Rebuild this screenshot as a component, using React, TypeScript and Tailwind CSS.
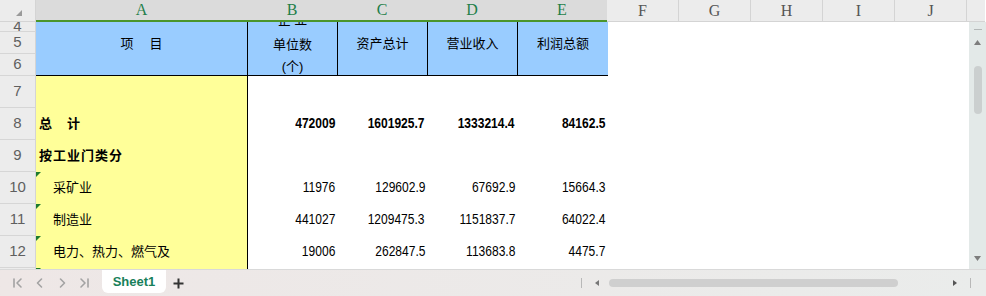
import React from 'react';

const cjk = "font-['Liberation_Sans','Noto_Sans_CJK_SC',sans-serif]";
const num = "font-['Liberation_Sans',sans-serif]";

type DataRow = {
  label: string;
  indent?: boolean;
  bold?: boolean;
  flag?: boolean;
  values: string[];
};

const dataRows: DataRow[] = [
  { label: '', values: ['', '', '', ''] },
  { label: '总　计', bold: true, values: ['472009', '1601925.7', '1333214.4', '84162.5'] },
  { label: '按工业门类分', bold: true, values: ['', '', '', ''] },
  { label: '采矿业', indent: true, flag: true, values: ['11976', '129602.9', '67692.9', '15664.3'] },
  { label: '制造业', indent: true, flag: true, values: ['441027', '1209475.3', '1151837.7', '64022.4'] },
  { label: '电力、热力、燃气及', indent: true, flag: true, values: ['19006', '262847.5', '113683.8', '4475.7'] },
  { label: '', flag: true, values: ['', '', '', ''] },
];

const rowLabels = [
  { n: '4', h: 'h-[10px]' },
  { n: '5', h: 'h-[22px]' },
  { n: '6', h: 'h-[22px]' },
  { n: '7', h: 'h-[32px]' },
  { n: '8', h: 'h-[32px]' },
  { n: '9', h: 'h-[32px]' },
  { n: '10', h: 'h-[32px]' },
  { n: '11', h: 'h-[32px]' },
  { n: '12', h: 'h-[32px]' },
  { n: '13', h: 'h-[32px]' },
];

function Flag() {
  return (
    <svg className="absolute left-0 top-0" width="5" height="5" viewBox="0 0 5 5">
      <path d="M0 0H5L0 5Z" fill="#1e7b2e" />
    </svg>
  );
}

function ColumnHeader() {
  return (
    <div className="flex h-[22px] w-[986px]">
      <div className="relative w-[36px] border-r border-b border-[#d4d4d4] bg-[#ececec]">
        <svg className="absolute left-[16px] top-[10px]" width="6" height="6" viewBox="0 0 6 6">
          <path d="M6 0V6H0Z" fill="#9a9a9a" />
        </svg>
      </div>
      <div className="flex border-b-2 border-[#4b952b] bg-[#dbdbdb] font-['Liberation_Serif',serif] text-[16px] text-[#1f7f4a]">
        <div className="flex w-[211px] items-center justify-center">A</div>
        <div className="flex w-[90px] items-center justify-center">B</div>
        <div className="flex w-[90px] items-center justify-center">C</div>
        <div className="flex w-[90px] items-center justify-center">D</div>
        <div className="flex w-[90px] items-center justify-center">E</div>
      </div>
      <div className="flex bg-[#ececec] font-['Liberation_Serif',serif] text-[16px] text-[#555]">
        {['F', 'G', 'H', 'I', 'J'].map((c) => (
          <div key={c} className="flex w-[72px] items-center justify-center border-r border-b border-[#d4d4d4]">
            {c}
          </div>
        ))}
      </div>
      <div className="w-[18px] border-b border-[#d4d4d4] bg-[#ececec]" />
    </div>
  );
}

function RowHeader() {
  return (
    <div className="flex w-[36px] flex-col overflow-hidden border-r border-[#d4d4d4] bg-[#ececec] font-['Liberation_Sans',sans-serif] text-[15px] text-[#5f5f5f]">
      {rowLabels.map((r) => (
        <div key={r.n} className={`${r.h} flex shrink-0 items-center justify-center border-b border-[#d6d6d6]`}>
          {r.n}
        </div>
      ))}
    </div>
  );
}

function Sheet() {
  return (
    <div className="grid h-[247px] grid-cols-[212px_90px_90px_90px_90px_360px] grid-rows-[10px_22px_22px_repeat(7,32px)] overflow-hidden">
      {/* header block, rows 4-6 merged */}
      <div className={`row-span-3 flex items-center justify-center gap-[16px] border-r border-b border-black bg-[#99ccff] pb-[10px] text-[13px] text-black ${cjk}`}>
        <span>项</span>
        <span>目</span>
      </div>
      <div className={`row-span-3 flex flex-col items-center justify-center overflow-hidden border-r border-b border-black bg-[#99ccff] pb-[10px] text-[13px] leading-[22px] text-black ${cjk}`}>
        <div className="mb-[3px] shrink-0">企 业</div>
        <div className="shrink-0">单位数</div>
        <div className="shrink-0">(个)</div>
      </div>
      {['资产总计', '营业收入', '利润总额'].map((t, i) => (
        <div
          key={t}
          className={`row-span-3 flex items-center justify-center border-b border-black bg-[#99ccff] pb-[10px] text-[13px] text-black ${cjk} ${i < 2 ? 'border-r' : ''}`}
        >
          {t}
        </div>
      ))}
      <div className="row-span-3 bg-white" />

      {dataRows.map((r, idx) => (
        <React.Fragment key={idx}>
          <div
            className={`relative flex items-center border-r border-black bg-[#ffff99] text-[13px] text-black ${cjk} ${
              r.indent ? 'pl-[17px]' : 'pl-[3px]'
            } ${r.bold ? 'font-bold tracking-[1px]' : ''}`}
          >
            {r.flag && <Flag />}
            {r.label}
          </div>
          {r.values.map((v, j) => (
            <div key={j} className="flex items-center justify-end bg-white pr-[3px]">
              <span
                className={`inline-block origin-right scale-x-[0.83] text-[14.5px] text-black ${num} ${r.bold ? 'font-bold' : ''}`}
              >
                {v}
              </span>
            </div>
          ))}
          <div className="bg-white" />
        </React.Fragment>
      ))}
    </div>
  );
}

function VScroll() {
  return (
    <div className="flex w-[18px] flex-col items-center border-l border-white bg-[#e3e9e8]">
      <div className="mt-[7px] h-[1px] w-[8px] bg-[#b3b8b8]" />
      <svg className="mt-[10px]" width="7" height="5" viewBox="0 0 7 5">
        <path d="M3.5 0L7 5H0Z" fill="#7d7d7d" />
      </svg>
      <div className="mt-[21px] h-[48px] w-[8px] rounded-full bg-[#cbcfcf]" />
      <div className="flex-1" />
      <svg className="mb-[8px]" width="7" height="5" viewBox="0 0 7 5">
        <path d="M0 0H7L3.5 5Z" fill="#7d7d7d" />
      </svg>
    </div>
  );
}

function NavIcon({ kind }: { kind: 'first' | 'prev' | 'next' | 'last' }) {
  const stroke = '#a3a3a3';
  return (
    <svg width="12" height="12" viewBox="0 0 12 12" fill="none" stroke={stroke} strokeWidth="1.6" strokeLinecap="round" strokeLinejoin="round">
      {kind === 'first' && (
        <>
          <path d="M2 2V10" />
          <path d="M9 2L5 6L9 10" />
        </>
      )}
      {kind === 'prev' && <path d="M7.5 2L3.5 6L7.5 10" />}
      {kind === 'next' && <path d="M4.5 2L8.5 6L4.5 10" />}
      {kind === 'last' && (
        <>
          <path d="M3 2L7 6L3 10" />
          <path d="M10 2V10" />
        </>
      )}
    </svg>
  );
}

function SheetBar() {
  return (
    <div className="flex h-[27px] items-start border-t border-[#d9d9d9] bg-gradient-to-r from-[#eee7e6] to-[#eaeceb]">
      <div className="flex h-[26px] items-center gap-[10px] pl-[12px]">
        <NavIcon kind="first" />
        <NavIcon kind="prev" />
        <NavIcon kind="next" />
        <NavIcon kind="last" />
      </div>
      <div className="ml-[12px] flex h-[23px] w-[64px] items-center justify-center rounded-b-[6px] bg-white font-['Liberation_Sans',sans-serif] text-[13px] font-bold text-[#18805a]">
        Sheet1
      </div>
      <div className="ml-[7px] flex h-[26px] items-center">
        <svg width="11" height="11" viewBox="0 0 11 11">
          <path d="M5.5 0.5V10.5M0.5 5.5H10.5" stroke="#333" strokeWidth="2" />
        </svg>
      </div>
      <div className="flex h-[26px] flex-1 items-center pl-[397px]">
        <div className="h-[10px] w-[1px] bg-[#b8b8b8]" />
        <svg className="ml-[13px]" width="4" height="6" viewBox="0 0 4 6">
          <path d="M0 3L4 0V6Z" fill="#777" />
        </svg>
        <div className="ml-[10px] h-[8px] w-[289px] rounded-full bg-[#cfcfcf]" />
        <svg className="ml-[55px]" width="4" height="6" viewBox="0 0 4 6">
          <path d="M4 3L0 0V6Z" fill="#555" />
        </svg>
        <div className="ml-[13px] h-[10px] w-[1px] bg-[#b8b8b8]" />
      </div>
    </div>
  );
}

export default function App() {
  return (
    <div className="h-[296px] w-[986px] overflow-hidden bg-white">
      <ColumnHeader />
      <div className="flex h-[247px]">
        <RowHeader />
        <Sheet />
        <VScroll />
      </div>
      <SheetBar />
    </div>
  );
}
